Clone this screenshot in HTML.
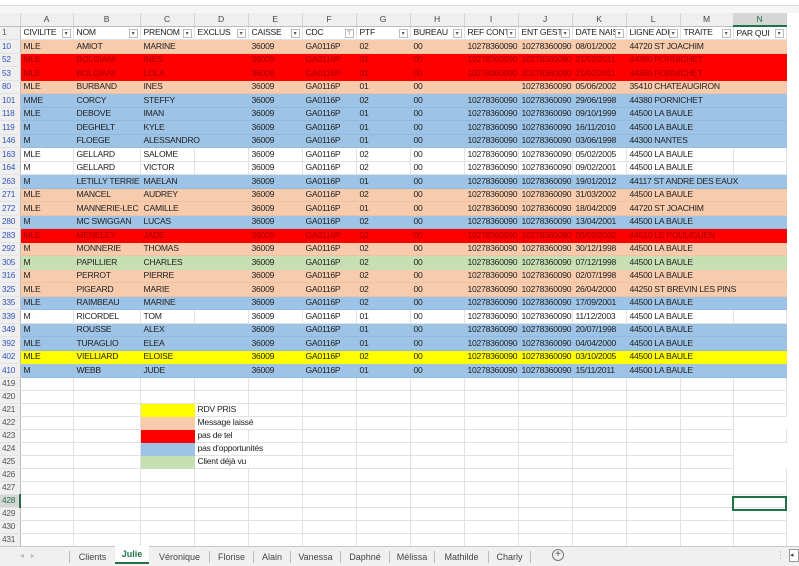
<!DOCTYPE html>
<html><head><meta charset="utf-8"><style>
*{margin:0;padding:0;box-sizing:border-box}
body{width:799px;height:566px;overflow:hidden;background:#fff;font-family:"Liberation Sans",sans-serif;font-size:8.6px;letter-spacing:-0.25px;color:#222;position:relative}
.top{position:absolute;left:0;top:0;width:799px;height:6px;background:#fff;border-bottom:1px solid #ddd}
.top2{position:absolute;left:0;top:6px;width:799px;height:7px;background:#f6f6f6}
table{position:absolute;left:0;top:13px;border-collapse:collapse;table-layout:fixed;width:786px}
td{height:13.5px;padding:0 0 0 3px;white-space:nowrap;overflow:hidden;border-right:1px solid #e2e2e2;border-bottom:1px solid #e2e2e2;line-height:11px}
tr.h td{height:13px;background:#efefef;text-align:center;color:#444;border-right:1px solid #d4d4d4;border-bottom:1px solid #bdbdbd;padding:0}
tr.h td.sel{background:#d6d6d6;border-bottom:2px solid #217346;color:#217346}
td.n{text-align:left;color:#3355bb;padding-left:2px;background:#efefef;border-right:1px solid #bdbdbd;font-size:8.3px}
td.g{color:#555}
tr.f td{position:relative}
tr.f td:not(.n) span.d{position:absolute;right:2px;top:2px;width:9px;height:9px;border:1px solid #bbb;background:#fff;font-size:6px;line-height:8px;text-align:center;color:#555}
.P td:not(.n){background:#f8cbad;border-color:#f8cbad;border-bottom-color:#f0c2a4}
.R td:not(.n){background:#ff0000;border-color:#ff0000;color:#a00000}
.B td:not(.n){background:#9dc3e6;border-color:#9dc3e6;border-bottom-color:#93b9dc}
.G td:not(.n){background:#c6e0b4;border-color:#c6e0b4}
.Y td:not(.n){background:#ffff00;border-color:#ffff00}
td.r{text-align:right;padding-right:1px}
tr.e td{height:13px}
.tabs{position:absolute;left:0;top:546px;width:799px;height:20px;background:#f0f0f0;border-top:1px solid #c8c8c8;font-size:9px;color:#444;letter-spacing:0}
.tab{position:absolute;top:4px;height:12px;line-height:12px;border-right:1px solid #bbb;text-align:center}
.act{position:absolute;left:115px;top:-1px;width:34px;height:18px;background:#fff;border-bottom:2px solid #217346;color:#217346;font-weight:bold;text-align:center;line-height:17px}
.selc{position:absolute;left:732px;top:496px;width:55px;height:15px;border:2px solid #217346}
</style></head><body>
<div class="top"></div><div class="top2"></div>
<table>
<colgroup><col style="width:20px"><col style="width:53px"><col style="width:67px"><col style="width:54px"><col style="width:54px"><col style="width:54px"><col style="width:54px"><col style="width:54px"><col style="width:54px"><col style="width:54px"><col style="width:54px"><col style="width:54px"><col style="width:54px"><col style="width:53px"><col style="width:53px"></colgroup>
<tr class="h"><td></td><td>A</td><td>B</td><td>C</td><td>D</td><td>E</td><td>F</td><td>G</td><td>H</td><td>I</td><td>J</td><td>K</td><td>L</td><td>M</td><td class="sel">N</td></tr>
<tr class="f"><td class="n g">1</td><td>CIVILITE<span class="d">▾</span></td><td>NOM<span class="d">▾</span></td><td>PRENOM<span class="d">▾</span></td><td>EXCLUS<span class="d">▾</span></td><td>CAISSE<span class="d">▾</span></td><td>CDC<span class="d">⊤</span></td><td>PTF<span class="d">▾</span></td><td>BUREAU<span class="d">▾</span></td><td>REF CONT<span class="d">▾</span></td><td>ENT GESTI<span class="d">▾</span></td><td>DATE NAIS<span class="d">▾</span></td><td>LIGNE ADI<span class="d">▾</span></td><td>TRAITE<span class="d">▾</span></td><td>PAR QUI<span class="d">▾</span></td></tr>
<tr class="P"><td class="n">10</td><td>MLE</td><td>AMIOT</td><td>MARINE</td><td></td><td>36009</td><td>GA0116P</td><td>02</td><td>00</td><td class="r">10278360090</td><td class="r">10278360090</td><td>08/01/2002</td><td colspan="3">44720 ST JOACHIM</td></tr>
<tr class="R"><td class="n">52</td><td>MLE</td><td>BOLGIANI</td><td>INES</td><td></td><td>36009</td><td>GA0116P</td><td>01</td><td>00</td><td class="r">10278360090</td><td class="r">10278360090</td><td>21/02/2011</td><td colspan="3">44380 PORNICHET</td></tr>
<tr class="R"><td class="n">53</td><td>MLE</td><td>BOLGIANI</td><td>LOLA</td><td></td><td>36009</td><td>GA0116P</td><td>01</td><td>00</td><td class="r">10278360090</td><td class="r">10278360090</td><td>21/02/2011</td><td colspan="3">44380 PORNICHET</td></tr>
<tr class="P"><td class="n">80</td><td>MLE</td><td>BURBAND</td><td>INES</td><td></td><td>36009</td><td>GA0116P</td><td>01</td><td>00</td><td class="r"></td><td class="r">10278360090</td><td>05/06/2002</td><td colspan="3">35410 CHATEAUGIRON</td></tr>
<tr class="B"><td class="n">101</td><td>MME</td><td>CORCY</td><td>STEFFY</td><td></td><td>36009</td><td>GA0116P</td><td>02</td><td>00</td><td class="r">10278360090</td><td class="r">10278360090</td><td>29/06/1998</td><td colspan="3">44380 PORNICHET</td></tr>
<tr class="B"><td class="n">118</td><td>MLE</td><td>DEBOVE</td><td>IMAN</td><td></td><td>36009</td><td>GA0116P</td><td>01</td><td>00</td><td class="r">10278360090</td><td class="r">10278360090</td><td>09/10/1999</td><td colspan="3">44500 LA BAULE</td></tr>
<tr class="B"><td class="n">119</td><td>M</td><td>DEGHELT</td><td>KYLE</td><td></td><td>36009</td><td>GA0116P</td><td>01</td><td>00</td><td class="r">10278360090</td><td class="r">10278360090</td><td>16/11/2010</td><td colspan="3">44500 LA BAULE</td></tr>
<tr class="B"><td class="n">146</td><td>M</td><td>FLOEGE</td><td colspan="2">ALESSANDRO</td><td>36009</td><td>GA0116P</td><td>01</td><td>00</td><td class="r">10278360090</td><td class="r">10278360090</td><td>03/06/1998</td><td colspan="3">44300 NANTES</td></tr>
<tr><td class="n">163</td><td>MLE</td><td>GELLARD</td><td>SALOME</td><td></td><td>36009</td><td>GA0116P</td><td>02</td><td>00</td><td class="r">10278360090</td><td class="r">10278360090</td><td>05/02/2005</td><td colspan="2">44500 LA BAULE</td><td></td></tr>
<tr><td class="n">164</td><td>M</td><td>GELLARD</td><td>VICTOR</td><td></td><td>36009</td><td>GA0116P</td><td>02</td><td>00</td><td class="r">10278360090</td><td class="r">10278360090</td><td>09/02/2001</td><td colspan="2">44500 LA BAULE</td><td></td></tr>
<tr class="B"><td class="n">263</td><td>M</td><td>LETILLY TERRIEN</td><td>MAELAN</td><td></td><td>36009</td><td>GA0116P</td><td>01</td><td>00</td><td class="r">10278360090</td><td class="r">10278360090</td><td>19/01/2012</td><td colspan="3">44117 ST ANDRE DES EAUX</td></tr>
<tr class="P"><td class="n">271</td><td>MLE</td><td>MANCEL</td><td>AUDREY</td><td></td><td>36009</td><td>GA0116P</td><td>02</td><td>00</td><td class="r">10278360090</td><td class="r">10278360090</td><td>31/03/2002</td><td colspan="3">44500 LA BAULE</td></tr>
<tr class="P"><td class="n">272</td><td>MLE</td><td>MANNERIE-LEC</td><td>CAMILLE</td><td></td><td>36009</td><td>GA0116P</td><td>01</td><td>00</td><td class="r">10278360090</td><td class="r">10278360090</td><td>18/04/2009</td><td colspan="3">44720 ST JOACHIM</td></tr>
<tr class="B"><td class="n">280</td><td>M</td><td>MC SWIGGAN</td><td>LUCAS</td><td></td><td>36009</td><td>GA0116P</td><td>02</td><td>00</td><td class="r">10278360090</td><td class="r">10278360090</td><td>13/04/2001</td><td colspan="3">44500 LA BAULE</td></tr>
<tr class="R"><td class="n">283</td><td>MLE</td><td>MENELEY</td><td>JADE</td><td></td><td>36009</td><td>GA0116P</td><td>02</td><td>00</td><td class="r">10278360090</td><td class="r">10278360090</td><td>06/02/2002</td><td colspan="3">44510 LE POULIGUEN</td></tr>
<tr class="P"><td class="n">292</td><td>M</td><td>MONNERIE</td><td>THOMAS</td><td></td><td>36009</td><td>GA0116P</td><td>02</td><td>00</td><td class="r">10278360090</td><td class="r">10278360090</td><td>30/12/1998</td><td colspan="3">44500 LA BAULE</td></tr>
<tr class="G"><td class="n">305</td><td>M</td><td>PAPILLIER</td><td>CHARLES</td><td></td><td>36009</td><td>GA0116P</td><td>02</td><td>00</td><td class="r">10278360090</td><td class="r">10278360090</td><td>07/12/1998</td><td colspan="3">44500 LA BAULE</td></tr>
<tr class="P"><td class="n">316</td><td>M</td><td>PERROT</td><td>PIERRE</td><td></td><td>36009</td><td>GA0116P</td><td>02</td><td>00</td><td class="r">10278360090</td><td class="r">10278360090</td><td>02/07/1998</td><td colspan="3">44500 LA BAULE</td></tr>
<tr class="P"><td class="n">325</td><td>MLE</td><td>PIGEARD</td><td>MARIE</td><td></td><td>36009</td><td>GA0116P</td><td>02</td><td>00</td><td class="r">10278360090</td><td class="r">10278360090</td><td>26/04/2000</td><td colspan="3">44250 ST BREVIN LES PINS</td></tr>
<tr class="B"><td class="n">335</td><td>MLE</td><td>RAIMBEAU</td><td>MARINE</td><td></td><td>36009</td><td>GA0116P</td><td>02</td><td>00</td><td class="r">10278360090</td><td class="r">10278360090</td><td>17/09/2001</td><td colspan="3">44500 LA BAULE</td></tr>
<tr><td class="n">339</td><td>M</td><td>RICORDEL</td><td>TOM</td><td></td><td>36009</td><td>GA0116P</td><td>01</td><td>00</td><td class="r">10278360090</td><td class="r">10278360090</td><td>11/12/2003</td><td colspan="2">44500 LA BAULE</td><td></td></tr>
<tr class="B"><td class="n">349</td><td>M</td><td>ROUSSE</td><td>ALEX</td><td></td><td>36009</td><td>GA0116P</td><td>01</td><td>00</td><td class="r">10278360090</td><td class="r">10278360090</td><td>20/07/1998</td><td colspan="3">44500 LA BAULE</td></tr>
<tr class="B"><td class="n">392</td><td>MLE</td><td>TURAGLIO</td><td>ELEA</td><td></td><td>36009</td><td>GA0116P</td><td>01</td><td>00</td><td class="r">10278360090</td><td class="r">10278360090</td><td>04/04/2000</td><td colspan="3">44500 LA BAULE</td></tr>
<tr class="Y"><td class="n">402</td><td>MLE</td><td>VIELLIARD</td><td>ELOISE</td><td></td><td>36009</td><td>GA0116P</td><td>02</td><td>00</td><td class="r">10278360090</td><td class="r">10278360090</td><td>03/10/2005</td><td colspan="3">44500 LA BAULE</td></tr>
<tr class="B"><td class="n">410</td><td>M</td><td>WEBB</td><td>JUDE</td><td></td><td>36009</td><td>GA0116P</td><td>01</td><td>00</td><td class="r">10278360090</td><td class="r">10278360090</td><td>15/11/2011</td><td colspan="3">44500 LA BAULE</td></tr>
<tr class="e"><td class="n g">419</td><td></td><td></td><td></td><td></td><td></td><td></td><td></td><td></td><td></td><td></td><td></td><td></td><td></td><td></td></tr>
<tr class="e"><td class="n g">420</td><td></td><td></td><td></td><td></td><td></td><td></td><td></td><td></td><td></td><td></td><td></td><td></td><td></td><td></td></tr>
<tr class="e"><td class="n g">421</td><td></td><td></td><td style="background:#ffff00;border-color:#ffff00"></td><td>RDV PRIS</td><td></td><td></td><td></td><td></td><td></td><td></td><td></td><td></td><td></td><td></td></tr>
<tr class="e"><td class="n g">422</td><td></td><td></td><td style="background:#f8cbad;border-color:#f8cbad"></td><td colspan="2">Message laissé</td><td></td><td></td><td></td><td></td><td></td><td></td><td></td><td></td></tr>
<tr class="e"><td class="n g">423</td><td></td><td></td><td style="background:#ff0000;border-color:#ff0000"></td><td>pas de tel</td><td></td><td></td><td></td><td></td><td></td><td></td><td></td><td></td><td></td><td></td></tr>
<tr class="e"><td class="n g">424</td><td></td><td></td><td style="background:#9dc3e6;border-color:#9dc3e6"></td><td colspan="2">pas d'opportunités</td><td></td><td></td><td></td><td></td><td></td><td></td><td></td><td></td></tr>
<tr class="e"><td class="n g">425</td><td></td><td></td><td style="background:#c6e0b4;border-color:#c6e0b4"></td><td colspan="2">Client déjà vu</td><td></td><td></td><td></td><td></td><td></td><td></td><td></td><td></td></tr>
<tr class="e"><td class="n g">426</td><td></td><td></td><td></td><td></td><td></td><td></td><td></td><td></td><td></td><td></td><td></td><td></td><td></td><td></td></tr>
<tr class="e"><td class="n g">427</td><td></td><td></td><td></td><td></td><td></td><td></td><td></td><td></td><td></td><td></td><td></td><td></td><td></td><td></td></tr>
<tr class="e"><td class="n" style="color:#217346;background:#d6d6d6;border-right:2px solid #217346">428</td><td></td><td></td><td></td><td></td><td></td><td></td><td></td><td></td><td></td><td></td><td></td><td></td><td></td><td></td></tr>
<tr class="e"><td class="n g">429</td><td></td><td></td><td></td><td></td><td></td><td></td><td></td><td></td><td></td><td></td><td></td><td></td><td></td><td></td></tr>
<tr class="e"><td class="n g">430</td><td></td><td></td><td></td><td></td><td></td><td></td><td></td><td></td><td></td><td></td><td></td><td></td><td></td><td></td></tr>
<tr class="e"><td class="n g">431</td><td></td><td></td><td></td><td></td><td></td><td></td><td></td><td></td><td></td><td></td><td></td><td></td><td></td><td></td></tr>
</table>
<div class="selc"></div>
<div class="tabs">
<span style="position:absolute;left:20px;top:4px;color:#bbb;font-size:8px">◂ &nbsp; ▸</span>
<div class="tab" style="left:69px;width:0;border-right:1px solid #bbb"></div>
<div class="tab" style="left:70px;width:46px">Clients</div>
<div class="act">Julie</div>
<div class="tab" style="left:150px;width:60px">Véronique</div>
<div class="tab" style="left:210px;width:44px">Florise</div>
<div class="tab" style="left:254px;width:37px">Alain</div>
<div class="tab" style="left:291px;width:50px">Vanessa</div>
<div class="tab" style="left:341px;width:49px">Daphné</div>
<div class="tab" style="left:390px;width:45px">Mélissa</div>
<div class="tab" style="left:435px;width:54px">Mathilde</div>
<div class="tab" style="left:489px;width:42px">Charly</div>
<span style="position:absolute;left:552px;top:2px;width:12px;height:12px;border:1px solid #777;border-radius:50%;text-align:center;line-height:10px;font-size:10px;color:#555">+</span>
<span style="position:absolute;left:776px;top:3px;color:#aaa">⋮</span>
<span style="position:absolute;left:789px;top:2px;width:10px;height:13px;border:1px solid #999;background:#fff;font-size:7px;line-height:11px">◂</span>
</div>
</body></html>
